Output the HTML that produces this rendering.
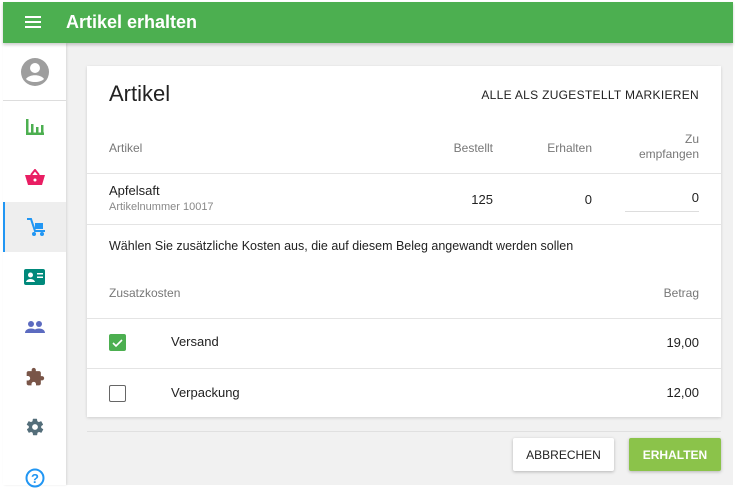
<!DOCTYPE html><html><head><style>
*{margin:0;padding:0;box-sizing:border-box}
body{width:735px;height:488px;background:#fff;font-family:"Liberation Sans",sans-serif;position:relative;overflow:hidden}
.frame{position:absolute;left:3px;top:2px;width:730px;height:483px;background:#f1f1f1}
.top{position:absolute;left:0;top:0;width:730px;height:41px;background:#4caf50;box-shadow:0 2px 3px rgba(0,0,0,.2);z-index:2}
.top .t{position:absolute;left:63px;top:10px;color:#fff;font-size:18px;font-weight:bold}
.side{position:absolute;left:0;top:41px;width:63px;height:442px;background:#fff;box-shadow:1px 0 2px rgba(0,0,0,.1)}
.ic{position:absolute;left:0;width:63px;height:50px;display:flex;align-items:center;justify-content:center}
.card{position:absolute;left:84px;top:64px;width:634px;height:351px;background:#fff;box-shadow:0 1px 3px rgba(0,0,0,.15)}
.a{position:absolute;font-size:12px;color:#777}
.b{position:absolute;font-size:12px;color:#222}
.hr{position:absolute;left:0;width:634px;height:1px;background:#e4e4e4}
.btn{position:absolute;top:436px;height:33px;font-size:12px;display:flex;align-items:center;justify-content:center;border-radius:2px;box-shadow:0 1px 3px rgba(0,0,0,.25)}
</style></head><body><div class="frame">
<div class="top"><svg style="position:absolute;left:22px;top:14px" width="16" height="12"><rect y="0" width="16" height="2" fill="#fff"/><rect y="5" width="16" height="2" fill="#fff"/><rect y="10" width="16" height="2" fill="#fff"/></svg><div class="t">Artikel erhalten</div></div>
<div class="side">
<div class="ic" style="top:4px"><svg width="28" height="28" viewBox="0 0 28 28"><circle cx="14" cy="14" r="14" fill="#9e9e9e"/><circle cx="14" cy="10" r="5" fill="#fff"/><path d="M5 21c3-5 15-5 18 0c-4 4-14 4-18 0z" fill="#fff"/></svg></div>
<div style="position:absolute;top:57px;left:0;width:63px;height:1px;background:#ddd"></div>
<div class="ic" style="top:59px"><svg width="18" height="16"><rect x="0" y="0" width="2.5" height="16" fill="#4caf50"/><rect x="0" y="13.5" width="18" height="2.5" fill="#4caf50"/><rect x="5" y="5" width="2.5" height="10" fill="#4caf50"/><rect x="10" y="8" width="2.5" height="7" fill="#4caf50"/><rect x="15" y="6" width="2.5" height="9" fill="#4caf50"/></svg></div>
<div class="ic" style="top:109px"><svg width="20" height="16"><path d="M6 6L10 1L14 6" stroke="#e91e63" stroke-width="2" fill="none"/><path d="M0 6h20l-3 10H3z" fill="#e91e63"/><circle cx="10" cy="11" r="1.5" fill="#fff"/></svg></div>
<div class="ic" style="top:159px;background:#eee;border-left:2px solid #2196f3"><svg width="20" height="20"><path d="M1 2h4l4 12h10" stroke="#2196f3" stroke-width="2" fill="none"/><rect x="9" y="6" width="8" height="6" fill="#2196f3"/><circle cx="8" cy="17" r="2" fill="#2196f3"/><circle cx="16" cy="17" r="2" fill="#2196f3"/></svg></div>
<div class="ic" style="top:209px"><svg width="21" height="16"><rect width="21" height="16" rx="2" fill="#00897b"/><circle cx="6.5" cy="6" r="2.5" fill="#fff"/><path d="M2 13c1-4 8-4 9 0z" fill="#fff"/><rect x="13" y="4" width="6" height="1.5" fill="#fff"/><rect x="13" y="7.5" width="6" height="1.5" fill="#fff"/></svg></div>
<div class="ic" style="top:259px"><svg width="20" height="12"><circle cx="6" cy="3" r="3" fill="#5c6bc0"/><circle cx="14" cy="3" r="3" fill="#5c6bc0"/><path d="M0 12c0-6 12-6 12 0zM8 12c0-6 12-6 12 0z" fill="#5c6bc0"/></svg></div>
<div class="ic" style="top:309px"><svg width="20" height="20" viewBox="0 0 24 24"><path d="M20.5 11H19V7c0-1.1-.9-2-2-2h-4V3.5a2.5 2.5 0 0 0-5 0V5H4c-1.1 0-2 .9-2 2v3.8h1.5c1.5 0 2.7 1.2 2.7 2.7S5 16.2 3.5 16.2H2V20c0 1.1.9 2 2 2h3.8v-1.5c0-1.5 1.2-2.7 2.7-2.7s2.7 1.2 2.7 2.7V22H17c1.1 0 2-.9 2-2v-4h1.5a2.5 2.5 0 0 0 0-5z" fill="#795548"/></svg></div>
<div class="ic" style="top:359px"><svg width="20" height="20" viewBox="0 0 24 24"><path d="M19.4 13c0-.3.1-.6.1-1s0-.7-.1-1l2.1-1.6c.2-.2.2-.4.1-.6l-2-3.5c-.1-.2-.4-.3-.6-.2l-2.5 1c-.5-.4-1.1-.7-1.700-1l-.4-2.6c0-.2-.2-.4-.5-.4h-4c-.2 0-.4.2-.5.4l-.4 2.6c-.6.3-1.2.6-1.7 1l-2.5-1c-.2-.1-.5 0-.6.2l-2 3.5c-.1.2-.1.5.1.6L4.6 11c0 .3-.1.6-.1 1s0 .7.1 1l-2.1 1.6c-.2.2-.2.4-.1.6l2 3.5c.1.2.4.3.6.2l2.5-1c.5.4 1.1.7 1.7 1l.4 2.6c0 .2.2.4.5.4h4c.2 0 .5-.2.5-.4l.4-2.6c.6-.3 1.2-.6 1.7-1l2.5 1c.2.1.5 0 .6-.2l2-3.5c.1-.2.1-.5-.1-.6zM12 15.5a3.5 3.5 0 1 1 0-7 3.5 3.5 0 0 1 0 7z" fill="#546e7a"/></svg></div>
<div class="ic" style="top:410px"><svg width="20" height="20"><circle cx="10" cy="10" r="8.5" stroke="#2196f3" stroke-width="2" fill="none"/><text x="10" y="15" font-size="13" font-weight="bold" fill="#2196f3" text-anchor="middle" font-family="Liberation Sans">?</text></svg></div>
</div>
<div class="card">
<div style="position:absolute;left:22px;top:15px;font-size:22px;color:#222">Artikel</div>
<div class="b" style="right:22px;top:22px;font-size:12px;color:#222;letter-spacing:.3px">ALLE ALS ZUGESTELLT MARKIEREN</div>
<div class="a" style="left:22px;top:75px">Artikel</div>
<div class="a" style="right:228px;top:75px">Bestellt</div>
<div class="a" style="right:129px;top:75px">Erhalten</div>
<div class="a" style="right:22px;top:66px;text-align:right;line-height:15px">Zu<br>empfangen</div>
<div class="hr" style="top:107px"></div>
<div class="b" style="left:22px;top:117px;font-size:13px">Apfelsaft</div>
<div class="a" style="left:22px;top:135px;font-size:11px;color:#888">Artikelnummer 10017</div>
<div class="b" style="right:228px;top:126px;font-size:13px">125</div>
<div class="b" style="right:129px;top:126px;font-size:13px">0</div>
<div class="b" style="right:22px;top:124px;font-size:13px">0</div>
<div style="position:absolute;left:538px;top:145px;width:74px;height:1px;background:#ddd"></div>
<div class="hr" style="top:158px"></div>
<div class="b" style="left:22px;top:173px;font-size:12.5px">Wählen Sie zusätzliche Kosten aus, die auf diesem Beleg angewandt werden sollen</div>
<div class="a" style="left:22px;top:220px">Zusatzkosten</div>
<div class="a" style="right:22px;top:220px">Betrag</div>
<div class="hr" style="top:252px"></div>
<div style="position:absolute;left:22px;top:268px;width:17px;height:17px;border-radius:2px;background:#4caf50"><svg width="17" height="17"><path d="M4 9l3 3l6-6" stroke="#fff" stroke-width="1.6" fill="none"/></svg></div>
<div class="b" style="left:84px;top:268px;font-size:13px">Versand</div>
<div class="b" style="right:22px;top:269px;font-size:13px">19,00</div>
<div class="hr" style="top:302px"></div>
<div style="position:absolute;left:22px;top:319px;width:17px;height:17px;border-radius:2px;border:1.5px solid #666"></div>
<div class="b" style="left:84px;top:319px;font-size:13px">Verpackung</div>
<div class="b" style="right:22px;top:319px;font-size:13px">12,00</div>
</div>
<div style="position:absolute;left:84px;top:429px;width:634px;height:1px;background:#e0e0e0"></div>
<div class="btn" style="left:510px;width:101px;background:#fff;color:#222">ABBRECHEN</div>
<div class="btn" style="left:626px;width:92px;background:#8bc34a;color:#fff;font-weight:bold">ERHALTEN</div>
</div></body></html>
